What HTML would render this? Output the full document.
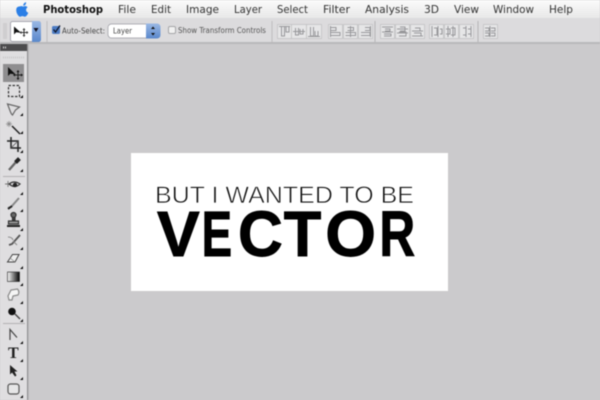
<!DOCTYPE html>
<html><head><meta charset="utf-8"><style>
html,body{margin:0;padding:0;width:600px;height:400px;overflow:hidden;background:#cbcacc}
svg{display:block;filter:blur(.45px)}
text{font-family:"DejaVu Sans","Liberation Sans",sans-serif}
text.l{font-family:"Liberation Sans",sans-serif}
</style></head><body>
<svg width="600" height="400" viewBox="0 0 600 400" xmlns="http://www.w3.org/2000/svg">
<defs>
<linearGradient id="mb" x1="0" y1="0" x2="0" y2="1"><stop offset="0" stop-color="#fbfbfb"/><stop offset="1" stop-color="#e9e9e9"/></linearGradient>
<linearGradient id="bl" x1="0" y1="0" x2="0" y2="1"><stop offset="0" stop-color="#9ab8e4"/><stop offset="1" stop-color="#5a88cc"/></linearGradient>
<linearGradient id="gr" x1="0" y1="0" x2="1" y2="0"><stop offset="0" stop-color="#fff"/><stop offset="1" stop-color="#000"/></linearGradient>
</defs>
<rect width="600" height="400" fill="#cbcacc"/>
<!-- menu bar -->
<rect width="600" height="17" fill="url(#mb)"/>
<path d="M19.500 6.500c1.500-.8 2.800-.3 3.800.1 1-.5 2.900-1 4.300.6-2.500 1.700-1.700 4.600.7 5.600-.8 2-2.100 3.900-3.500 3.900-1 0-1.400-.6-2.400-.6s-1.400.6-2.400.6c-2.200 0-5.400-6.700-2.800-9.400.7-.7 1.800-.9 2.300-.8zM23.300 5.800c-.2-1.700 1-3.200 2.800-3.500.2 1.800-1 3.400-2.800 3.500z" fill="#2b7fe6"/>
<g font-size="10.500" fill="#333">
<text x="43" y="13" font-weight="700" textLength="60" lengthAdjust="spacingAndGlyphs" fill="#111">Photoshop</text>
<text x="118" y="13" textLength="18" lengthAdjust="spacingAndGlyphs">File</text>
<text x="151" y="13" textLength="20" lengthAdjust="spacingAndGlyphs">Edit</text>
<text x="186" y="13" textLength="33" lengthAdjust="spacingAndGlyphs">Image</text>
<text x="234" y="13" textLength="28" lengthAdjust="spacingAndGlyphs">Layer</text>
<text x="277" y="13" textLength="31" lengthAdjust="spacingAndGlyphs">Select</text>
<text x="323" y="13" textLength="27" lengthAdjust="spacingAndGlyphs">Filter</text>
<text x="365" y="13" textLength="44" lengthAdjust="spacingAndGlyphs">Analysis</text>
<text x="424" y="13" textLength="15" lengthAdjust="spacingAndGlyphs">3D</text>
<text x="454" y="13" textLength="25" lengthAdjust="spacingAndGlyphs">View</text>
<text x="493" y="13" textLength="41" lengthAdjust="spacingAndGlyphs">Window</text>
<text x="549" y="13" textLength="24" lengthAdjust="spacingAndGlyphs">Help</text>
</g>
<!-- options bar -->
<rect y="17" width="600" height="26" fill="#dcdbdd"/>
<rect y="17" width="600" height="1" fill="#e8e8e9"/>
<rect y="42" width="600" height="2" fill="#b9b8ba"/>
<rect x="3" y="23" width="4" height="16" fill="#cfced0"/>
<rect x="10.500" y="21.500" width="30" height="20" rx="2" fill="#fff" stroke="#a8a8b0"/>
<path d="M32 21h6q3 0 3 3v15q0 3-3 3h-6z" fill="url(#bl)"/>
<path d="M33.500 28h5l-2.500 4z" fill="#101020"/>
<path d="M14 26.500l0 8 2.200-2.200 5 .6z" fill="#111"/>
<path d="M24 29v7M20.500 32.500h7" stroke="#333" stroke-width="1"/>
<path d="M24 28l-1.500 2h3zM24 37l-1.500-2h3zM19.500 32.500l2-1.500v3zM28.500 32.500l-2-1.500v3z" fill="#333"/>
<rect x="46.500" y="21" width="1" height="21" fill="#bdbcbe"/>
<rect x="52" y="26" width="8" height="8" rx="1.500" fill="#4d7cc4"/>
<path d="M53.500 29.500l2 2.500 4.500-6.500" stroke="#10182c" stroke-width="1.300" fill="none"/>
<text x="62" y="33.300" font-size="7.800" fill="#444" textLength="43" lengthAdjust="spacingAndGlyphs">Auto-Select:</text>
<rect x="108" y="24" width="52" height="14" rx="3.500" fill="#fff" stroke="#9a9aa2" stroke-width=".7"/>
<path d="M146 23.500h10.500q4 0 4 4v7q0 4-4 4h-10.500z" fill="url(#bl)"/>
<path d="M153 26.500l-2 2.500h4zM153 35.500l-2-2.500h4z" fill="#111"/>
<text x="113" y="33.500" font-size="7.800" fill="#444" textLength="19" lengthAdjust="spacingAndGlyphs">Layer</text>
<rect x="168.500" y="26.500" width="7" height="7" rx="1.500" fill="#f1f1f1" stroke="#a5a5a8"/>
<text x="178" y="33" font-size="7.800" fill="#555" textLength="88" lengthAdjust="spacingAndGlyphs">Show Transform Controls</text>
<rect x="271.500" y="21" width="1" height="21" fill="#bdbcbe"/>
<!-- align buttons -->
<g fill="#e6e6e7" stroke="#c2c2c4" stroke-width=".8">
<rect x="277.500" y="24.500" width="14" height="14"/><rect x="291.500" y="24.500" width="15" height="14"/><rect x="306.500" y="24.500" width="15" height="14"/>
<rect x="328.500" y="24.500" width="14" height="14"/><rect x="343.500" y="24.500" width="14" height="14"/><rect x="358.500" y="24.500" width="14" height="14"/>
<rect x="380.500" y="24.500" width="14" height="14"/><rect x="395.500" y="24.500" width="14" height="14"/><rect x="410.500" y="24.500" width="14" height="14"/>
<rect x="429.500" y="24.500" width="14" height="14"/><rect x="444.500" y="24.500" width="14" height="14"/><rect x="459.500" y="24.500" width="14" height="14"/>
<rect x="483.500" y="24.500" width="14" height="14"/>
</g>
<g fill="none" stroke="#98989b" stroke-width="1">
<path d="M279 26.500h11M281.500 27v9h3v-9M286 27v5h3v-5"/>
<path d="M293 31.500h12M295.500 28v7h3v-7M300 29v5h3v-5"/>
<path d="M308 36.500h12M310.500 27v9h3v-9M315 31v5h3v-5"/>
<path d="M330.500 26v11M331 27.500h5v3h-5M331 32.500h9v3h-9"/>
<path d="M350.500 26v11M347.500 27.500h6v3h-6M345.500 32.500h10v3h-10"/>
<path d="M370.500 26v11M365 27.500h5v3h-5M361 32.500h9v3h-9"/>
<path d="M382 27h11M385 29h5v2h-5M382 32h11M384 34h7v2h-7"/>
<path d="M397 29h11M400 27h5v4h-5M397 33h11M399 32h7v4h-7"/>
<path d="M412 31h11M415 28h5v3h-5M412 36h11M414 33h7v3h-7"/>
<path d="M432 26v11M434 28h3v7h-3M438 26v11M440 29h2v5h-2"/>
<path d="M448 26v11M446 29h4v5h-4M453 26v11M451 28h4v7h-4"/>
<path d="M466 26v11M463 28h3v7h-3M471 26v11M468 29h3v5h-3"/>
<path d="M490 26v11M485 28h4v3h-4M485 33h4v3h-4M491 28h4v3h-4M491 33h4v3h-4"/>
</g>
<rect x="374.500" y="21" width="1" height="21" fill="#b5b4b6"/>
<rect x="477.500" y="21" width="1" height="21" fill="#b5b4b6"/>
<!-- tool panel -->
<rect y="44" width="28" height="356" fill="#dfdee0"/>
<rect y="44" width="28" height="7" fill="#4c4b4d"/>
<path d="M3 47.500h1M5 47.500h1" stroke="#d0d0d0" stroke-width="2"/>
<rect x="27" y="44" width="1" height="356" fill="#8e8d8f"/>
<rect x="28" y="44" width="1" height="356" fill="#bdbcbe"/>
<path d="M3 57.500h21" stroke="#c9c8ca" stroke-width="2" stroke-dasharray="1 1"/>
<rect x="3" y="64" width="21" height="18" fill="#8f8e90"/>
<g fill="#111">
<path d="M8 67l0 9 2.300-2.300 5.200.5z"/>
<path d="M18 71v8M14 75h8" stroke="#222" stroke-width="1"/>
<path d="M18 70l-1.500 2h3zM18 80l-1.500-2h3zM13 75l2-1.500v3zM23 75l-2-1.500v3z"/>
<!-- corner triangles -->
<path d="M23 98v-3l-3 3zM23 116v-3l-3 3zM23 134v-3l-3 3zM23 153v-3l-3 3zM23 172v-3l-3 3zM23 195v-3l-3 3zM23 212v-3l-3 3zM23 231v-3l-3 3zM23 250v-3l-3 3zM23 269v-3l-3 3zM23 286v-3l-3 3zM23 304v-3l-3 3zM23 322v-3l-3 3zM23 344v-3l-3 3zM23 362v-3l-3 3zM23 380v-3l-3 3zM23 398v-3l-3 3z"/>
</g>
<g fill="none" stroke="#333" stroke-width="1.200">
<rect x="8.500" y="85.500" width="11" height="11" stroke-dasharray="2.500 1.500" stroke="#333"/>
<path d="M7.500 104l12 3-4 3-3 5-1-1-1-2z" stroke="#666"/>
<path d="M12 126l8 8" stroke="#222" stroke-width="1.500"/>
<path d="M6 124h6M9 121v6M7 122l4 4M11 122l-4 4" stroke="#888" stroke-width=".7"/>
<!-- crop -->
<path d="M11 137v11h10M7 141h11v11" stroke="#222" stroke-width="1.500"/>
<path d="M11 148l7-7" stroke="#555" stroke-width=".8"/>
<!-- eyedropper -->
<path d="M9 170l7-8" stroke="#666" stroke-width="2.400"/>
<path d="M15 161l3-3 2 2-3 3z" fill="#222" stroke="#222"/>
<path d="M5 184h6M8 181v6" stroke="#777" stroke-width=".9"/>
<path d="M9 184q5-4 11 0q-5 5-11 0z" stroke="#333"/>
<circle cx="15" cy="185" r="2.200" fill="#222" stroke="none"/>
<path d="M8 208l3-1 8-9" stroke="#888" stroke-width="2"/>
<path d="M8 209l4-3" stroke="#222" stroke-width="2"/>
<rect x="12.500" y="216" width="2.500" height="4" fill="#444"/>
<circle cx="13.500" cy="215" r="2.500" fill="#666"/>
<rect x="8.500" y="221" width="10" height="3" fill="#999"/>
<rect x="7" y="225" width="13" height="2" fill="#222" stroke="none"/>
<!-- history brush -->
<path d="M9 245l3-1 8-9" stroke="#555" stroke-width="1.800"/>
<path d="M8 237q4 0 5 3M17 245l-4-4" stroke="#888" stroke-width="1"/>
<path d="M7.500 262l5-7.500h6.500l-4 7.500z" stroke="#444" fill="#eee" stroke-width="1"/>
<path d="M10 258l5 4" stroke="#888" stroke-width=".8"/>
<rect x="7.500" y="272" width="12" height="9.500" fill="url(#gr)" stroke="#222" stroke-width=".6"/>
<path d="M9 300l-1-4 3-6 6.500-1q2.500 3 .5 6l-5 1-1 4z" stroke="#888" fill="#f5f5f5"/>
<circle cx="12" cy="311.500" r="3.800" fill="#111" stroke="none"/>
<path d="M15 314l5 5" stroke="#444" stroke-width="1.400"/>
<path d="M3 323.500h22" stroke="#b2b1b3" stroke-width="1"/>
<path d="M3 176.500h22" stroke="#b2b1b3" stroke-width="1"/>
<path d="M10 340v-10.500l7 8" stroke="#444" stroke-width="1.200"/>
<path d="M10 365v9.500l2-2 3 4 1.500-1-2-4h3z" fill="#222" stroke="none"/>
<rect x="8" y="384" width="11" height="10" rx="2.500" fill="#e6e6e7" stroke="#555"/>
</g>
<text x="8" y="358" font-size="16" font-weight="700" fill="#222" style="font-family:'Liberation Serif',serif">T</text>
<!-- canvas -->
<rect x="131" y="153" width="317" height="138" fill="#fff"/>
<text class="l" x="155" y="203" font-size="24.500" fill="#111" stroke="#fff" stroke-width=".65" textLength="259" lengthAdjust="spacingAndGlyphs">BUT I WANTED TO BE</text>
<g font-size="64" font-weight="700" fill="#000" stroke="#000" stroke-width=".9">
<text class="l" transform="translate(157 256)">V</text>
<text class="l" transform="translate(201.600 256) scale(.714 1)">E</text>
<text class="l" transform="translate(238 256) scale(.97 1)">C</text>
<text class="l" transform="translate(283.700 256) scale(.96 1)">T</text>
<text class="l" transform="translate(325.200 256) scale(1.020 1)">O</text>
<text class="l" transform="translate(379.400 256) scale(.775 1)">R</text>
</g>
</svg>
</body></html>
